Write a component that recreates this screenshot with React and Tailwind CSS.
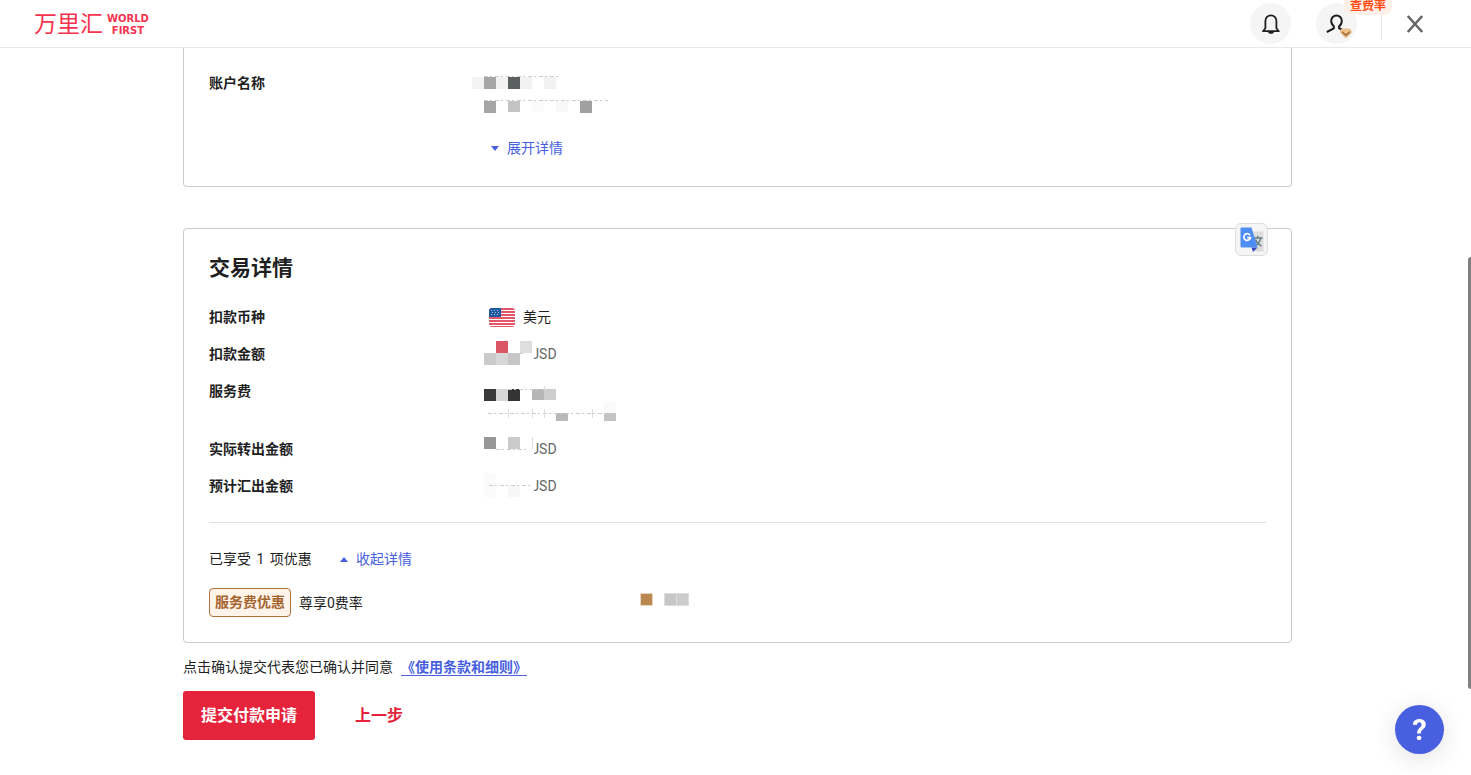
import React, { useState } from 'react'

const BellIcon = () => (
    <svg width="24" height="24" viewBox="0 0 24 24" fill="none" stroke="#1f1f1f" strokeWidth="1.8" strokeLinejoin="round">
        <path d="M6.400 16.200V8.800a5.500 5.500 0 0 1 11 0v7.400l2.400 3H4z" />
        <path d="M9 20h6c-.4 1.300-1.500 1.800-3 1.800s-2.600-.5-3-1.800z" fill="#1f1f1f" stroke="none" />
    </svg>
)

const UserIcon = () => (
    <svg width="28" height="28" viewBox="0 0 28 28" fill="none">
        <path d="M1.800 20l7-3.600v-2.200C7 12.800 6.200 10.800 6.200 8.800a5.300 5.300 0 0 1 10.600 0c0 2.200-.8 4.200-2.700 5.500v2l2.500 1" stroke="#1f1f1f" strokeWidth="2" />
        <path d="M17 16.500h7.400q3 1.800 2.600 4L20.800 26.500L14.800 20.500q-.4-2.200 2.200-4z" fill="#ecc18d" />
        <path d="M17 19l4 3 4-3v2l-4 3.400-4-3.400z" fill="#a87443" />
    </svg>
)

const CloseIcon = () => (
    <svg width="18" height="18" viewBox="0 0 18 18" fill="none" stroke="#666666" strokeWidth="2.600">
        <path d="M1.800 1L16.200 17M16.200 1L1.800 17" />
    </svg>
)

const stripes = [0, 3, 6, 9, 12, 15, 18]
const stars = [[2, 2], [5, 2], [8, 2], [3, 4], [6, 4], [9, 4], [2, 6], [5, 6], [8, 6]]

const UsFlag = () => (
    <svg width="26" height="19" viewBox="0 0 26 19" className="mt-px rounded-[3px]">
        <rect width="26" height="19" fill="#ffffff" />
        {stripes.map((y) => <rect key={y} y={y} width="26" height="2" fill="#e3566a" />)}
        <rect width="12" height="9" fill="#1f5aa0" />
        {stars.map(([x, y]) => <rect key={x + '-' + y} x={x} y={y} width="1" height="1" fill="#a9c4e2" />)}
    </svg>
)

const TranslateIcon = () => (
    <svg width="24" height="25" viewBox="0 0 24 25">
        <path d="M8 4.500h15.500v20H15z" fill="#dcdcdc" />
        <path d="M13 11h9.500M17.700 9v2M20.800 11c-.8 3.600-3 6.400-6.300 8M15.500 12.500c1 2.800 3 5 6 6.700" stroke="#607d80" strokeWidth="1.400" fill="none" />
        <path d="M11.500 20.500h6L13 25z" fill="#3844b8" />
        <path d="M1.500 .5H11.500L17.500 20.500H1.500Q.5 20.500 .5 19.500V1.500Q.5 .5 1.500 .5z" fill="#4f8df5" />
        <path d="M10 8.300A3.300 3.300 0 1 0 10.400 10.700H7.200" stroke="#ffffff" strokeWidth="1.700" fill="none" />
    </svg>
)

// cells: [x, y, width, height, colour], lines: [x1, y, x2], ticks: [x, y1, y2]
const Mosaic = ({ width, height, cells, lines = [], ticks = [], className = '' }) => (
    <svg width={width} height={height} viewBox={`0 0 ${width} ${height}`} className={'shrink-0 ' + className} shapeRendering="crispEdges" aria-hidden="true">
        {cells.map(([x, y, w, h, fill], i) => <rect key={i} x={x} y={y} width={w} height={h} fill={fill} />)}
        {lines.map(([x1, y, x2], i) => <path key={i} d={`M${x1} ${y + 0.5}H${x2}`} stroke="#cccccc" strokeDasharray="4 2 2 3" />)}
        {ticks.map(([x, y1, y2], i) => <path key={i} d={`M${x + 0.5} ${y1}V${y2}`} stroke="#dddddd" />)}
    </svg>
)

const nameCells = [
    [0, 4, 12, 12, '#f3f3f3'], [12, 4, 12, 12, '#a5a5a5'], [24, 4, 12, 12, '#f2f2f2'],
    [36, 4, 12, 12, '#5c5f5f'], [48, 4, 12, 12, '#f2f2f2'], [72, 4, 12, 12, '#f2f2f2'],
    [12, 28, 12, 12, '#a5a5a5'], [36, 28, 12, 11, '#c4c4c4'], [60, 28, 12, 11, '#fbfbfb'],
    [84, 28, 12, 11, '#f8f8f8'], [108, 28, 12, 12, '#a0a0a0'],
]

const amountCells = [
    [40, 0, 10, 26, '#ffffff'],
    [12, 0, 12, 12, '#dc5766'], [36, 0, 12, 12, '#dedede'],
    [0, 12, 12, 12, '#cbcbcb'], [12, 12, 12, 12, '#d7d7d7'], [24, 12, 12, 12, '#c6c6c6'],
]

const feeCells = [
    [0, 8, 12, 12, '#3a3a3a'], [12, 8, 12, 12, '#d7d7d7'], [24, 8, 12, 12, '#343434'],
    [48, 8, 12, 11, '#b6b6b6'], [60, 8, 12, 11, '#cecece'],
    [120, 21, 12, 11, '#fafafa'], [72, 32, 12, 8, '#bababa'], [120, 32, 12, 8, '#c4c4c4'],
]

const actualCells = [
    [40, 0, 10, 26, '#ffffff'],
    [0, 1, 12, 12, '#979797'], [24, 1, 12, 12, '#cbcbcb'],
]

const expectedCells = [
    [40, 0, 10, 26, '#ffffff'],
    [0, 0, 12, 24, '#fbfbfb'], [24, 12, 12, 12, '#f7f7f7'],
]

const Row = ({ label, children }) => (
    <div className="flex">
        <dt className="w-[275px] shrink-0 font-bold">{label}</dt>
        <dd className="min-w-0 flex-1">{children}</dd>
    </div>
)

const Amount = ({ cells, lines, ticks }) => (
    <div className="flex h-5 items-center text-[#666666]">
        <Mosaic width={50} height={26} cells={cells} lines={lines} ticks={ticks} className="relative z-10" />
        <span className="-ml-1">USD</span>
    </div>
)

const App = () => {
    const [open, setOpen] = useState(true)

    return (
        <div className="min-h-screen bg-white font-[Roboto,'Noto_Sans_CJK_SC',sans-serif] text-sm leading-5 text-[#1f1f1f]">
            <header className="flex h-12 items-center justify-between border-b border-[#e8e8e8] pr-[47px] pl-[34px]">
                <a href="#" className="flex items-center gap-1 pt-0.5 text-[#f5334f]">
                    <span className="text-[23px] leading-6">万里汇</span>
                    <span className="flex flex-col items-center font-['DejaVu_Sans',sans-serif] text-[10px] leading-3 font-bold">
                        <span>WORLD</span>
                        <span>FIRST</span>
                    </span>
                </a>
                <div className="flex items-center">
                    <button type="button" aria-label="消息" className="flex size-[41px] items-center justify-center rounded-full bg-[#f5f5f5]">
                        <BellIcon />
                    </button>
                    <div className="relative ml-[25px]">
                        <button type="button" aria-label="账户" className="flex size-[41px] items-center justify-center rounded-full bg-[#f5f5f5] pt-1 pl-1">
                            <UserIcon />
                        </button>
                        <a href="#" className="absolute -top-1.5 left-7 rounded-b-lg bg-[#fff1e9] px-1.5 text-xs leading-[18px] font-bold whitespace-nowrap text-[#ff4d14]">查费率</a>
                    </div>
                    <span className="mt-1 ml-6 h-7 w-px bg-[#e8e8e8]"></span>
                    <button type="button" aria-label="关闭" className="ml-6">
                        <CloseIcon />
                    </button>
                </div>
            </header>

            <main className="pr-[179px] pl-[183px]">
                <section className="rounded-b border border-t-0 border-[#cccccc] px-[25px] pt-[25px] pb-7">
                    <dl>
                        <Row label="账户名称">
                            <Mosaic width={150} height={40} cells={nameCells} lines={[[12, 3, 88], [12, 27, 136]]} className="-ml-3" />
                            <button type="button" className="mt-[25px] ml-[7px] flex items-center gap-2 text-[#485fdf]">
                                <svg width="8" height="5" viewBox="0 0 8 5"><path d="M0 0H8L4 5z" fill="currentColor" /></svg>
                                展开详情
                            </button>
                        </Row>
                    </dl>
                </section>

                <section className="relative mt-[41px] rounded border border-[#cccccc] p-[25px]">
                    <button type="button" aria-label="翻译" className="absolute -top-1.5 right-[23px] flex size-[33px] items-center justify-center rounded-md border border-[#dddddd] bg-[#f5f5f5]">
                        <TranslateIcon />
                    </button>
                    <h2 className="text-[21px] leading-7 font-bold">交易详情</h2>
                    <dl className="mt-[25px] flex flex-col gap-[17px]">
                        <Row label="扣款币种">
                            <div className="flex h-5 items-center gap-2 pl-[5px]">
                                <UsFlag />
                                美元
                            </div>
                        </Row>
                        <Row label="扣款金额">
                            <Amount cells={amountCells} lines={[[24, 12, 40]]} />
                        </Row>
                        <Row label="服务费">
                            <Mosaic
                                width={140}
                                height={41}
                                cells={feeCells}
                                lines={[[24, 8, 72], [4, 32, 132]]}
                                ticks={[[24, 28, 37], [48, 28, 37], [60, 28, 37], [108, 28, 37], [60, 5, 9]]}
                            />
                        </Row>
                        <Row label="实际转出金额">
                            <Amount cells={actualCells} lines={[[12, 13, 42]]} ticks={[[48, 1, 13]]} />
                        </Row>
                        <Row label="预计汇出金额">
                            <Amount cells={expectedCells} lines={[[5, 12, 48]]} />
                        </Row>
                    </dl>

                    <hr className="mt-[26px] border-[#e0e0e0]" />

                    <div className="mt-[26px] flex items-center">
                        <span className="w-[131px]">已享受 <span className="mx-0.5">1</span> 项优惠</span>
                        <button type="button" onClick={() => setOpen(!open)} className="flex items-center gap-2 text-[#485fdf]">
                            <svg width="8" height="5" viewBox="0 0 8 5"><path d="M0 5H8L4 0z" fill="currentColor" /></svg>
                            收起详情
                        </button>
                    </div>
                    {open && (
                        <div className="mt-[19px] flex items-center">
                            <div className="flex w-[415px] items-center gap-2">
                                <span className="rounded border border-[#b0713a] bg-[#fff3ea] px-[5px] py-1 leading-[19px] font-bold text-[#a5652f]">服务费优惠</span>
                                <span>尊享0费率</span>
                            </div>
                            <Mosaic
                                width={70}
                                height={20}
                                cells={[[16, 0, 13, 13, '#e8d5c2'], [17, 1, 11, 11, '#bb8751'], [40, 0, 25, 13, '#dddddd'], [41, 1, 11, 11, '#c6c6c6'], [53, 1, 11, 11, '#cccccc']]}
                            />
                        </div>
                    )}
                </section>

                <p className="mt-3.5">
                    点击确认提交代表您已确认并同意
                    <a href="#" className="ml-2 border-b border-[#485fdf] font-bold text-[#485fdf]">《使用条款和细则》</a>
                </p>

                <div className="mt-3.5 flex items-center gap-10 text-base font-bold">
                    <button type="submit" className="h-[49px] rounded-[3px] bg-[#e5233a] px-[18px] text-white">提交付款申请</button>
                    <button type="button" className="text-[#e5233a]">上一步</button>
                </div>
            </main>

            <div className="fixed top-[257px] right-0 h-[432px] w-[3px] rounded-l bg-[#808080]"></div>
            <button type="button" aria-label="帮助" className="fixed right-[27px] bottom-[21px] size-[49px] rounded-full bg-[#485fdf] text-[29px] font-bold text-white shadow-[0_4px_24px_rgba(0,0,0,0.12)]">?</button>
        </div>
    )
}

export default App
